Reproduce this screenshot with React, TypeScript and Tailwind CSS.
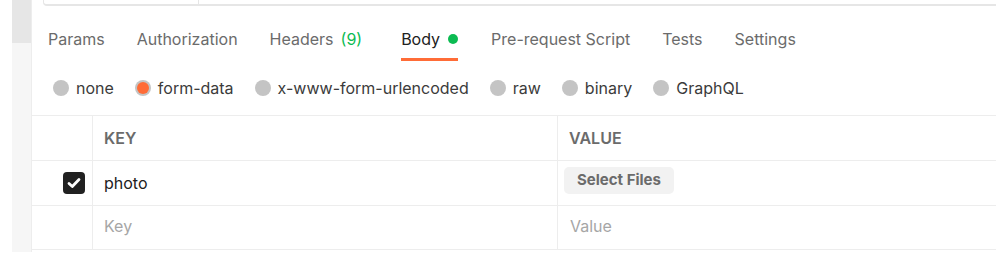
const tabs = [
  { label: "Params" },
  { label: "Authorization" },
  { label: "Headers", count: "(9)" },
  { label: "Body", active: true },
  { label: "Pre-request Script" },
  { label: "Tests" },
  { label: "Settings" },
];

const bodyTypes = ["none", "form-data", "x-www-form-urlencoded", "raw", "binary", "GraphQL"];

const Radio = ({ checked }: { checked?: boolean }) =>
  checked ? (
    <span className="w-[16px] h-[16px] rounded-full bg-[#c4c4c4] flex items-center justify-center">
      <span className="w-[12px] h-[12px] rounded-full bg-[#ff6c37]" />
    </span>
  ) : (
    <span className="w-[16px] h-[16px] rounded-full bg-[#c4c4c4]" />
  );

export default function App() {
  return (
    <div
      className="w-[996px] h-[279px] bg-white flex overflow-hidden"
      style={{ fontFamily: "Inter, 'Noto Sans', sans-serif" }}
    >
      {/* left gutter */}
      <div className="w-[12px] shrink-0" />
      <div className="w-[19px] shrink-0 flex flex-col">
        <div className="h-[43px] bg-[#e6e6e6]" />
        <div className="h-[209px] bg-[#f6f6f6]" />
      </div>

      <div className="flex-1 flex flex-col">
        <div className="h-[252px] border-l border-[#ededed] flex flex-col">
          {/* url bar edge */}
          <div className="pl-[11px]">
            <div className="h-[6px] border-b-2 border-l border-[#e6e6e6] rounded-bl-[4px] flex">
              <div className="w-[155px] border-r border-[#e6e6e6]" />
            </div>
          </div>

          {/* tabs */}
          <div className="h-[55px] flex items-stretch gap-[32px] pl-[16px] text-[16px] text-[#6b6b6b]">
            {tabs.map((t) => (
              <div
                key={t.label}
                className={
                  "flex items-center gap-[7px] pt-[14px] border-b-[3px] " +
                  (t.active ? "border-[#ff6c37] text-[#212121] ml-[7px] mr-[1px]" : "border-transparent")
                }
              >
                <span>{t.label}</span>
                {t.count && <span className="text-[#0cbb52]">{t.count}</span>}
                {t.active && <span className="w-[10px] h-[10px] rounded-full bg-[#0cbb52] ml-[1px]" />}
              </div>
            ))}
          </div>

          {/* body types */}
          <div className="h-[54px] flex items-center gap-[21px] pl-[21px] text-[16px] text-[#3b3b3b]">
            {bodyTypes.map((b) => (
              <label key={b} className="flex items-center gap-[7px]">
                <Radio checked={b === "form-data"} />
                <span>{b}</span>
              </label>
            ))}
          </div>

          {/* table */}
          <div className="border-t border-[#ededed] text-[16px]">
            <div className="h-[45px] flex border-b border-[#ededed]">
              <div className="w-[61px] border-r border-[#ededed]" />
              <div className="w-[465px] border-r border-[#ededed] flex items-center px-[11px] font-semibold text-[#6b6b6b]">
                KEY
              </div>
              <div className="flex-1 flex items-center px-[11px] font-semibold text-[#6b6b6b]">
                VALUE
              </div>
            </div>
            <div className="h-[45px] flex border-b border-[#ededed]">
              <div className="w-[61px] border-r border-[#ededed] flex items-center justify-end pr-[7px]">
                <span className="w-[22px] h-[22px] rounded-[4px] bg-[#212121] flex items-center justify-center">
                  <svg width="16" height="16" viewBox="0 0 16 16" fill="none">
                    <path d="M3 8.5 L6.3 11.5 L13 4.5" stroke="white" strokeWidth="2.8" strokeLinecap="round" strokeLinejoin="round" />
                  </svg>
                </span>
              </div>
              <div className="w-[465px] border-r border-[#ededed] flex items-center px-[11px] text-[#212121]">
                photo
              </div>
              <div className="flex-1 flex items-center px-[6px] pb-[5px]">
                <button className="h-[27px] px-[13px] rounded-[5px] bg-[#f2f2f2] font-bold text-[15px] text-[#6b6b6b]">
                  Select Files
                </button>
              </div>
            </div>
            <div className="h-[44px] flex border-b border-[#ededed]">
              <div className="w-[61px] border-r border-[#ededed]" />
              <div className="w-[465px] border-r border-[#ededed] flex items-center px-[11px] pb-[4px] text-[#a6a6a6]">
                Key
              </div>
              <div className="flex-1 flex items-center px-[12px] pb-[4px] text-[#a6a6a6]">Value</div>
            </div>
          </div>
        </div>
      </div>
    </div>
  );
}
